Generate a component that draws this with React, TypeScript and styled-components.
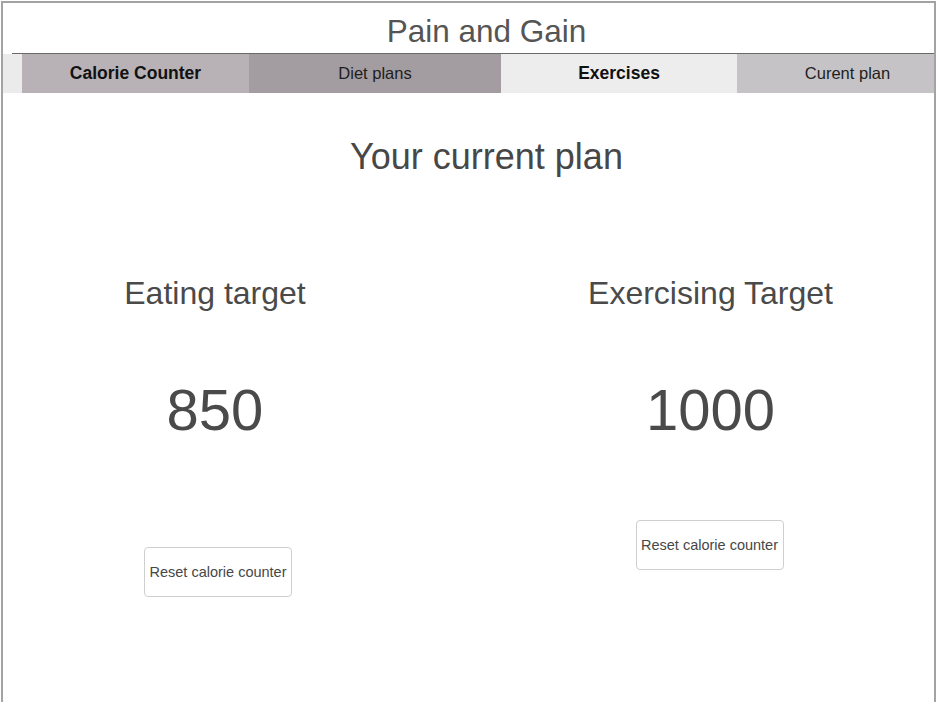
import React from 'react';
import styled, { createGlobalStyle } from 'styled-components';

const GlobalStyle = createGlobalStyle`
    html, body {
        margin: 0;
        padding: 0;
        background: #ffffff;
        font-family: "Liberation Sans", Arial, sans-serif;
        overflow: hidden;
    }
`;

const Frame = styled.div`
    margin: 1px 1px 0 1px;
    height: 701px;
    border: 2px solid #a3a3a3;
    border-bottom: none;
    box-sizing: border-box;
    background: #ffffff;
`;

const Header = styled.header`
    height: 50px;
    margin-left: 9px;
    border-bottom: 1px solid #6a6a6a;
    box-sizing: content-box;
`;

const AppTitle = styled.h1`
    margin: 0 0 0 -9px;
    padding: 6px 0 0 36px;
    height: 44px;
    line-height: 44px;
    text-align: center;
    font-size: 31.5px;
    font-weight: normal;
    color: #555555;
`;

const TabBar = styled.nav`
    display: flex;
    height: 39px;
    padding-left: 19px;
    background: #ebebeb;
`;

interface TabProps {
    bg: string;
    w?: number;
    bold?: boolean;
    shift?: number;
}

const Tab = styled.div<TabProps>`
    display: flex;
    align-items: center;
    justify-content: center;
    box-sizing: border-box;
    ${props => props.w ? `width: ${props.w}px;` : 'flex: 1;'}
    padding-left: ${props => props.shift || 0}px;
    background: ${props => props.bg};
    font-size: ${props => props.bold ? '17.5px' : '16.5px'};
    font-weight: ${props => props.bold ? 'bold' : 'normal'};
    color: ${props => props.bold ? '#111111' : '#1e1e1e'};
`;

const PageTitle = styled.h2`
    margin: 46px 0 0 0;
    padding-left: 36px;
    line-height: 35px;
    text-align: center;
    font-size: 36px;
    font-weight: normal;
    color: #474747;
`;

const Columns = styled.div`
    display: grid;
    grid-template-columns: 424px 447px;
    column-gap: 60px;
    margin-top: 103px;
`;

const Column = styled.section`
    display: flex;
    flex-direction: column;
    align-items: center;
`;

const TargetLabel = styled.h3`
    margin: 0;
    line-height: 32px;
    font-size: 32px;
    font-weight: normal;
    color: #4a4a4a;
`;

const TargetValue = styled.div`
    margin-top: 72px;
    line-height: 57px;
    font-size: 58px;
    color: #4a4a4a;
`;

const ResetButton = styled.button<{ offset: number; shift: number }>`
    margin-top: ${props => props.offset}px;
    margin-left: ${props => props.shift}px;
    width: 148px;
    height: 50px;
    padding: 0;
    background: #ffffff;
    border: 1px solid #cfcfcf;
    border-radius: 4px;
    font-family: "Liberation Sans", Arial, sans-serif;
    font-size: 14.5px;
    color: #474747;
`;

const App: React.FC = () => {
    return (
        <>
            <GlobalStyle />
            <Frame>
                <Header>
                    <AppTitle>Pain and Gain</AppTitle>
                </Header>
                <TabBar>
                    <Tab bg="#b8b2b7" w={227} bold>Calorie Counter</Tab>
                    <Tab bg="#a39ca1" w={252}>Diet plans</Tab>
                    <Tab bg="#ededed" w={236} bold>Exercises</Tab>
                    <Tab bg="#c5c3c5" shift={24}>Curent plan</Tab>
                </TabBar>
                <PageTitle>Your current plan</PageTitle>
                <Columns>
                    <Column>
                        <TargetLabel>Eating target</TargetLabel>
                        <TargetValue>850</TargetValue>
                        <ResetButton offset={109} shift={6}>Reset calorie counter</ResetButton>
                    </Column>
                    <Column>
                        <TargetLabel>Exercising Target</TargetLabel>
                        <TargetValue>1000</TargetValue>
                        <ResetButton offset={82} shift={-2}>Reset calorie counter</ResetButton>
                    </Column>
                </Columns>
            </Frame>
        </>
    );
};

export default App;
